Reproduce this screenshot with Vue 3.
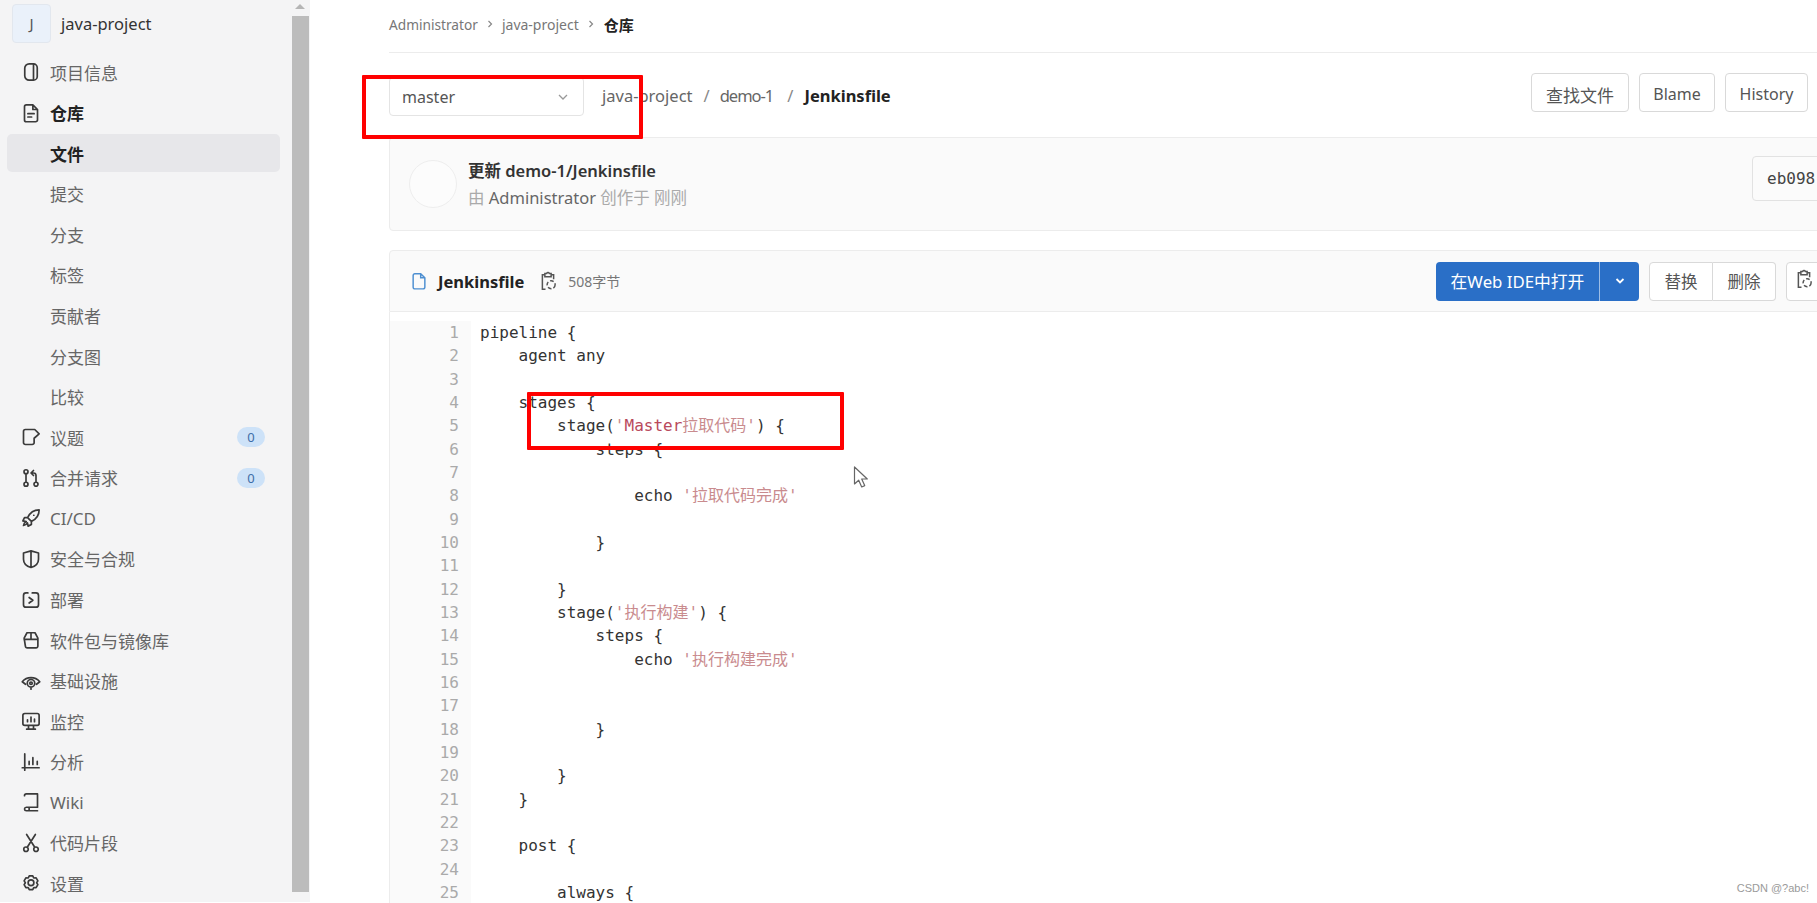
<script setup>
const icons = {
  info: 'M6.5 1.5h3.5a3 3 0 0 1 3 3v7a3 3 0 0 1-3 3H6.5a3.5 3.5 0 0 1-3.5-3.5v-6a3.5 3.5 0 0 1 3.5-3.5z M10 1.5v13',
  doc: 'M2.8 3a1.5 1.5 0 0 1 1.5-1.5h5.2L13.2 5.2v8.3a1.5 1.5 0 0 1-1.5 1.5H4.3a1.5 1.5 0 0 1-1.5-1.5z M9.5 1.5v3.7h3.7 M5.5 8.5h5 M5.5 11.2h3',
  issue: 'M11 2H3.5A1.5 1.5 0 0 0 2 3.5v9A1.5 1.5 0 0 0 3.5 14h5.5a1.5 1.5 0 0 0 1.5-1.5V9L14.5 5.5z',
  merge: 'M4 4.6v6.8 M5.6 3a1.6 1.6 0 1 1-3.2 0 1.6 1.6 0 0 1 3.2 0z M5.6 13a1.6 1.6 0 1 1-3.2 0 1.6 1.6 0 0 1 3.2 0z M13.6 13a1.6 1.6 0 1 1-3.2 0 1.6 1.6 0 0 1 3.2 0z M12 11.4V6a2 2 0 0 0-2-2H8.2 M10 2 8 4l2 2',
  rocket: 'M14.5 1.5c-4.2 0-7.3 2.2-9.2 6.2l3 3c4-1.9 6.2-5 6.2-9.2z M5.3 7.7H2.8L1.5 10.3l2.7.6 M8.3 10.7v2.5l-2.6 1.3-.6-2.7 M4 11c-1.2.5-1.8 1.6-2 3 1.4-.2 2.5-.8 3-2 M10.2 5.8h.1',
  shield: 'M8 1.5l6 1.7v4.9c0 3.4-2.4 5.6-6 6.7-3.6-1.1-6-3.3-6-6.7V3.2z M8 1.5v13',
  deploy: 'M5.5 2.3H4a2 2 0 0 0-2 2v7.4a2 2 0 0 0 2 2h8a2 2 0 0 0 2-2V4.3a2 2 0 0 0-2-2H9 M6.5 6l3 2.2-3 2.2',
  pkg: 'M2.5 6.5 4.8 2.2h6.4l2.3 4.3v6.3a1.5 1.5 0 0 1-1.5 1.5h-7a1.5 1.5 0 0 1-1.5-1.5z M2.5 7.5h11 M8 2.2v5.3',
  infra: 'M3.6 10.6 1 8.6a9.2 9.2 0 0 1 14 0l-2.6 2 M11 9.8a3 3 0 1 1-6 0 3 3 0 0 1 6 0z M9 9.8a1 1 0 1 1-2 0 1 1 0 0 1 2 0z M8 12.8v1.7',
  monitor: 'M3 2h10a1.5 1.5 0 0 1 1.5 1.5v6.5A1.5 1.5 0 0 1 13 11.5H3A1.5 1.5 0 0 1 1.5 10V3.5A1.5 1.5 0 0 1 3 2z M5.2 8.6V7 M8 8.6V4.8 M10.8 8.6V6.5 M6 11.5v3 M10 11.5v3 M4.5 14.5h7',
  chart: 'M3 1.5v13 M1 12.6h13.5 M6.5 10V7.5 M9.5 10V4.5 M13 10V7.5',
  wiki: 'M2.8 3a1.5 1.5 0 0 1 1.5-1.5h8.9v10.7H4.3a1.5 1.5 0 0 0-1.5 1.4 1.5 1.5 0 0 0 1.5 1.4h8.9 M6.5 12.2v2.8',
  snip: 'M5.8 13a1.8 1.8 0 1 1-3.6 0 1.8 1.8 0 0 1 3.6 0z M13.8 13a1.8 1.8 0 1 1-3.6 0 1.8 1.8 0 0 1 3.6 0z M5 11.4 11.5 1.2 M11 11.4 4.5 1.2',
  gear: 'M6.6 1.5h2.8l.8 1.7 1.9-.1 1.4 2.4-1 1.5 1 1.5-1.4 2.4-1.9-.1-.8 1.7H6.6l-.8-1.7-1.9.1-1.4-2.4 1-1.5-1-1.5 1.4-2.4 1.9.1z M10.3 7a2.3 2.3 0 1 1-4.6 0 2.3 2.3 0 0 1 4.6 0z'
}

const navItems = [
  { label: '项目信息', icon: 'info' },
  { label: '仓库', icon: 'doc', strong: true },
  { label: '文件', sub: true, strong: true, active: true },
  { label: '提交', sub: true },
  { label: '分支', sub: true },
  { label: '标签', sub: true },
  { label: '贡献者', sub: true },
  { label: '分支图', sub: true },
  { label: '比较', sub: true },
  { label: '议题', icon: 'issue', badge: 0 },
  { label: '合并请求', icon: 'merge', badge: 0 },
  { label: 'CI/CD', icon: 'rocket' },
  { label: '安全与合规', icon: 'shield' },
  { label: '部署', icon: 'deploy' },
  { label: '软件包与镜像库', icon: 'pkg' },
  { label: '基础设施', icon: 'infra' },
  { label: '监控', icon: 'monitor' },
  { label: '分析', icon: 'chart' },
  { label: 'Wiki', icon: 'wiki' },
  { label: '代码片段', icon: 'snip' },
  { label: '设置', icon: 'gear' }
]

const code = [
  { a: 'pipeline {' },
  { a: '    agent any' },
  { a: '' },
  { a: '    stages {' },
  { a: '        stage(', q: "'", v: 'Master', s: "拉取代码'", b: ') {' },
  { a: '            steps {' },
  { a: '' },
  { a: '                echo ', s: "'拉取代码完成'" },
  { a: '' },
  { a: '            }' },
  { a: '' },
  { a: '        }' },
  { a: '        stage(', s: "'执行构建'", b: ') {' },
  { a: '            steps {' },
  { a: '                echo ', s: "'执行构建完成'" },
  { a: '' },
  { a: '' },
  { a: '            }' },
  { a: '' },
  { a: '        }' },
  { a: '    }' },
  { a: '' },
  { a: '    post {' },
  { a: '' },
  { a: '        always {' }
]

const clipboard = 'M5.5 3H3.5v11.5H6 M10.5 3h2v3.5 M5.5 3.2V2h1.4a1.2 1.2 0 0 1 2.2 0h1.4v2.6h-5z'
</script>

<template>
  <div class="page">
    <aside class="sidebar">
      <div class="nav-col">
        <div class="project">
          <span class="avatar">J</span>
          <span class="project-name">java-project</span>
        </div>
        <nav class="nav">
          <a
            v-for="item in navItems"
            :key="item.label"
            class="nav-item"
            :class="{ sub: item.sub, strong: item.strong, active: item.active }"
          >
            <svg v-if="item.icon" class="nav-icon" viewBox="0 0 16 16">
              <path :d="icons[item.icon]" />
            </svg>
            <span class="nav-label">{{ item.label }}</span>
            <span v-if="item.badge !== undefined" class="badge">{{ item.badge }}</span>
          </a>
        </nav>
      </div>
      <div class="scrollbar">
        <span class="arrow"></span>
        <span class="thumb"></span>
      </div>
    </aside>

    <main class="main">
      <div class="content">
        <div class="crumbs">
          <span class="crumb-first">Administrator</span>
          <svg class="crumb-sep" viewBox="0 0 8 10"><path d="M2.5 2l3 3-3 3" /></svg>
          <span>java-project</span>
          <svg class="crumb-sep last" viewBox="0 0 8 10"><path d="M2.5 2l3 3-3 3" /></svg>
          <strong>仓库</strong>
        </div>

        <div class="toolbar">
          <div class="branch">
            <span>master</span>
            <svg class="branch-caret" viewBox="0 0 12 8"><path d="M2 2l4 4 4-4" /></svg>
          </div>
          <div class="path">
            <span>java-project</span><i>/</i><span class="dir">demo-1</span><i>/</i><b>Jenkinsfile</b>
          </div>
          <div class="actions">
            <button class="btn find">查找文件</button>
            <button class="btn blame">Blame</button>
            <button class="btn history">History</button>
            <button class="btn edge" aria-label="permalink"></button>
          </div>
        </div>

        <section class="commit">
          <span class="commit-avatar"></span>
          <div class="commit-text">
            <div class="commit-title">更新 demo-1/Jenkinsfile</div>
            <div class="commit-meta"><span>由</span> <em>Administrator</em> <span>创作于 刚刚</span></div>
          </div>
          <button class="btn sha">eb098</button>
        </section>

        <section class="file">
          <header class="file-head">
            <svg class="file-icon" viewBox="0 0 16 16">
              <path d="M2.8 3a1.5 1.5 0 0 1 1.5-1.5h5.2L13.2 5.2v8.3a1.5 1.5 0 0 1-1.5 1.5H4.3a1.5 1.5 0 0 1-1.5-1.5z M9.5 1.5v3.7h3.7" />
            </svg>
            <b class="file-name">Jenkinsfile</b>
            <svg class="clip-icon" viewBox="0 0 16 16">
              <path :d="clipboard" /><circle cx="10.5" cy="11" r="3.2" stroke-dasharray="3 1.6" />
            </svg>
            <span class="file-size">508字节</span>
            <div class="file-actions">
              <div class="split">
                <button class="primary main-part">在Web IDE中打开</button>
                <button class="primary caret-part" aria-label="more">
                  <svg viewBox="0 0 12 8"><path d="M2.5 2l3.5 3.5L9.5 2" /></svg>
                </button>
              </div>
              <div class="group">
                <button class="btn">替换</button>
                <button class="btn">删除</button>
              </div>
              <button class="btn clip-btn" aria-label="copy">
                <svg class="clip-icon" viewBox="0 0 16 16">
                  <path :d="clipboard" /><circle cx="10.5" cy="11" r="3.2" stroke-dasharray="3 1.6" />
                </svg>
              </button>
            </div>
          </header>
          <div class="code">
            <div v-for="(line, i) in code" :key="i" class="line">
              <span class="num">{{ i + 1 }}</span>
              <pre class="src">{{ line.a }}<span v-if="line.q" class="str">{{ line.q }}</span><span v-if="line.v" class="str vivid">{{ line.v }}</span><span v-if="line.s" class="str">{{ line.s }}</span>{{ line.b }}</pre>
            </div>
          </div>
        </section>
      </div>
    </main>

    <div class="mark mark-branch"></div>
    <div class="mark mark-stage"></div>
    <svg class="cursor" viewBox="0 0 16 23">
      <path d="M1.5 1v17l4.2-3.8 3 6.8 3-1.4-3-6.6h5.6z" />
    </svg>
    <div class="watermark">CSDN @?abc!</div>
  </div>
</template>

<style>
html, body { margin: 0; overflow: hidden; background: #fff; }
</style>

<style scoped>
.page {
  position: relative;
  display: flex;
  width: 1817px;
  height: 903px;
  overflow: hidden;
  background: #fff;
  color: #333;
  font-family: "Noto Sans", "Noto Sans CJK SC", sans-serif;
}

/* sidebar */
.sidebar {
  display: flex;
  flex: none;
  width: 310px;
  height: 902px;
  background: #f4f4f5;
}
.nav-col { width: 291px; }
.project {
  display: flex;
  align-items: center;
  gap: 10px;
  height: 53px;
  padding-left: 12px;
  padding-bottom: 7px;
  box-sizing: border-box;
}
.avatar {
  display: flex;
  align-items: center;
  justify-content: center;
  width: 39px;
  height: 39px;
  box-sizing: border-box;
  border: 1px solid #e2e7ee;
  border-radius: 4px;
  background: #eaf1fa;
  font-size: 15px;
  color: #555;
}
.project-name { font-size: 16.5px; color: #333; }
.nav { padding: 0 11px 0 7px; }
.nav-item {
  display: flex;
  align-items: center;
  height: 38px;
  margin-bottom: 2.58px;
  padding: 0 15px 0 14px;
  border-radius: 5px;
  font-size: 17px;
  color: #666;
}
.nav-item.sub { padding-left: 43px; }
.nav-item.strong { color: #222; font-weight: 700; }
.nav-item.active { background: #e7e7ea; }
.nav-icon {
  flex: none;
  width: 20px;
  height: 20px;
  margin-right: 9px;
  fill: none;
  stroke: #3a3a3a;
  stroke-width: 1.35;
  stroke-linejoin: round;
  stroke-linecap: round;
}
.nav-label { flex: 1; }
.badge {
  width: 28px;
  height: 20px;
  border-radius: 10px;
  background: #cde2f8;
  color: #3d6ea8;
  font-size: 13px;
  line-height: 20px;
  text-align: center;
}
.scrollbar {
  display: flex;
  flex-direction: column;
  align-items: center;
  width: 18px;
}
.arrow {
  flex: none;
  width: 0;
  height: 0;
  margin: 4px 0 7px;
  border-left: 5px solid transparent;
  border-right: 5px solid transparent;
  border-bottom: 5px solid #b5b5b5;
}
.thumb {
  flex: none;
  width: 17px;
  height: 876px;
  background: #bcbcbc;
}

/* main */
.main { flex: 1; min-width: 0; overflow: hidden; }
.content {
  width: 1600px;
  margin-left: 79px;
}
.crumbs {
  display: flex;
  align-items: center;
  height: 53px;
  padding-bottom: 4px;
  box-sizing: border-box;
  border-bottom: 1px solid #ececec;
  font-size: 14px;
  color: #777;
}
.crumb-first { font-size: 13.7px; }
.crumbs strong { color: #222; font-weight: 700; font-size: 15px; }
.crumb-sep {
  width: 8px;
  height: 10px;
  margin: 0 8px 0 8px;
  fill: none;
  stroke: #888;
  stroke-width: 1.2;
}
.crumb-sep.last { margin-right: 9px; }

.toolbar {
  display: flex;
  align-items: flex-start;
  height: 84px;
}
.branch {
  display: flex;
  align-items: center;
  justify-content: space-between;
  width: 195px;
  height: 39px;
  margin-top: 24px;
  padding: 0 14px 0 12px;
  box-sizing: border-box;
  border: 1px solid #e4e4e4;
  border-radius: 4px;
  font-size: 16px;
  color: #555;
}
.branch-caret {
  width: 12px;
  height: 8px;
  fill: none;
  stroke: #999;
  stroke-width: 1.3;
}
.path {
  display: flex;
  align-items: center;
  height: 39px;
  margin: 23px 0 0 18px;
  font-size: 16.5px;
  color: #666;
}
.path i { margin: 0 11px; font-style: normal; color: #888; }
.path .dir { margin-left: -1px; margin-right: 3px; letter-spacing: -1px; }
.path b { color: #222; font-size: 16.5px; }

.actions {
  display: flex;
  gap: 10px;
  margin: 20px 75px 0 auto;
}
.btn {
  flex: none;
  height: 39px;
  padding: 0;
  box-sizing: border-box;
  border: 1px solid #d9d9d9;
  border-radius: 4px;
  background: #fff;
  color: #555;
  font: inherit;
  font-size: 16px;
}
.actions .btn { padding-top: 3px; }
.find { width: 98px; font-size: 17px; }
.blame { width: 76px; }
.history { width: 83px; }
.edge { width: 96px; }

.commit {
  display: flex;
  align-items: center;
  height: 94px;
  padding-left: 19px;
  box-sizing: border-box;
  border: 1px solid #ececec;
  border-radius: 4px;
  background: #fafafa;
}
.commit-avatar {
  flex: none;
  width: 48px;
  height: 48px;
  margin-right: 11px;
  box-sizing: border-box;
  border: 1px solid #eee;
  border-radius: 50%;
  background: #fcfcfc;
}
.commit-text { font-size: 16.5px; line-height: 27px; }
.commit-title { font-weight: 600; color: #333; }
.commit-meta { color: #aaa; }
.commit-meta em { font-style: normal; color: #666; }
.sha {
  align-self: flex-start;
  width: 140px;
  height: 45px;
  margin-top: 18px;
  margin-left: auto;
  margin-right: 96px;
  padding: 0 14px;
  text-align: left;
  border-color: #e2e2e2;
  background: #fbfbfb;
  color: #444;
  font-family: "DejaVu Sans Mono", monospace;
  font-size: 16px;
}

.file { margin-top: 19px; }
.file-head {
  display: flex;
  align-items: center;
  height: 62px;
  padding-left: 20px;
  box-sizing: border-box;
  border: 1px solid #ececec;
  border-radius: 4px 4px 0 0;
  background: #fafafa;
}
.file-icon {
  flex: none;
  width: 18px;
  height: 18px;
  margin-right: 10px;
  fill: none;
  stroke: #4d8fd1;
  stroke-width: 1.3;
}
.file-name { font-size: 16.5px; color: #222; }
.clip-icon {
  flex: none;
  width: 20px;
  height: 20px;
  fill: none;
  stroke: #555;
  stroke-width: 1.2;
}
.file-name + .clip-icon { margin-left: 14px; }
.file-size { margin-left: 10px; font-size: 14px; color: #777; }
.file-actions {
  display: flex;
  gap: 10px;
  margin-left: auto;
  margin-right: 152px;
}
.split { display: flex; }
.primary {
  height: 39px;
  border: 0;
  background: #2a6fc7;
  color: #fff;
  font: inherit;
  font-size: 16.8px;
}
.main-part { width: 163px; padding: 0; border-radius: 4px 0 0 4px; }
.caret-part {
  display: flex;
  align-items: center;
  justify-content: center;
  width: 40px;
  padding: 0;
  border-left: 1px solid #9dbde6;
  border-radius: 0 4px 4px 0;
}
.caret-part svg {
  width: 12px;
  height: 8px;
  fill: none;
  stroke: #fff;
  stroke-width: 1.8;
}
.group { display: flex; }
.group .btn { width: 64px; font-size: 16.5px; }
.group .btn:first-child { border-radius: 4px 0 0 4px; }
.group .btn:last-child { width: 63px; border-left: 0; border-radius: 0 4px 4px 0; }
.clip-btn { width: 50px; padding: 0 0 0 7px; text-align: left; }

.code {
  padding-top: 9px;
  border-left: 1px solid #ececec;
}
.line {
  display: flex;
  height: 23.33px;
  font-family: "DejaVu Sans Mono", "Noto Sans CJK SC", monospace;
  font-size: 16px;
  line-height: 23.33px;
}
.num {
  flex: none;
  width: 69px;
  padding-right: 12px;
  background: #fafafa;
  color: #aaa;
  text-align: right;
}
.src {
  margin: 0;
  padding-left: 9px;
  font: inherit;
  color: #333;
  white-space: pre;
}
.str { color: #c98b8e; }
.str.vivid { color: #b9495c; }

/* annotations over the screenshot */
.mark {
  position: absolute;
  box-sizing: border-box;
  border: 4px solid #f00;
  border-radius: 1px;
}
.mark-branch { left: 362px; top: 75px; width: 281px; height: 64px; }
.mark-stage { left: 527px; top: 392px; width: 317px; height: 58px; }
.cursor {
  position: absolute;
  left: 853px;
  top: 466px;
  width: 16px;
  height: 23px;
  fill: #fff;
  stroke: #666;
  stroke-width: 1.2;
  stroke-linejoin: round;
}
.watermark {
  position: absolute;
  right: 8px;
  top: 882px;
  font-family: "Liberation Sans", sans-serif;
  font-size: 11px;
  color: #9a9a9a;
}
</style>
